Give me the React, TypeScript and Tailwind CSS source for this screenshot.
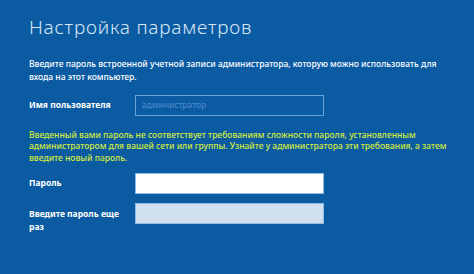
export default function App() {
  return (
    <div
      className="w-[474px] h-[274px] bg-[#0b5ba3] overflow-hidden pl-[29px]"
      style={{ fontFamily: '"Noto Sans", "Open Sans", sans-serif' }}
    >
      <h1 className="pt-[17px] text-[19px] font-light leading-[21px] tracking-[0.8px] text-[#d9e9f7]">
        Настройка параметров
      </h1>

      <p className="mt-[20px] whitespace-nowrap text-[8.5px] leading-[12.5px] font-medium text-white">
        Введите пароль встроенной учетной записи администратора, которую можно использовать для
        <br />
        входа на этот компьютер.
      </p>

      <div className="mt-[12px] flex items-center">
        <label className="w-[106px] text-[8.5px] font-bold text-white">
          Имя пользователя
        </label>
        <div className="w-[189px] h-[21px] border border-[#67a2da] flex items-center pl-[6px] text-[8.5px] text-[#4d8bcb]">
          администратор
        </div>
      </div>

      <p className="mt-[13px] whitespace-nowrap text-[8.5px] leading-[11.3px] font-medium text-[#d3ec3c]">
        Введенный вами пароль не соответствует требованиям сложности пароля, установленным
        <br />
        администратором для вашей сети или группы. Узнайте у администратора эти требования, а затем
        <br />
        введите новый пароль.
      </p>

      <div className="mt-[10px] flex items-center">
        <label className="w-[106px] text-[8.5px] font-bold text-white">Пароль</label>
        <div className="w-[189px] h-[21px] bg-white border border-[#8fbce6]" />
      </div>

      <div className="mt-[9px] flex items-start">
        <label className="w-[106px] pt-[4px] text-[8.5px] leading-[13px] font-bold text-white">
          Введите пароль еще
          <br />
          раз
        </label>
        <div className="w-[189px] h-[21px] bg-[#cfdfee] border border-[#8fbce6]" />
      </div>
    </div>
  );
}
